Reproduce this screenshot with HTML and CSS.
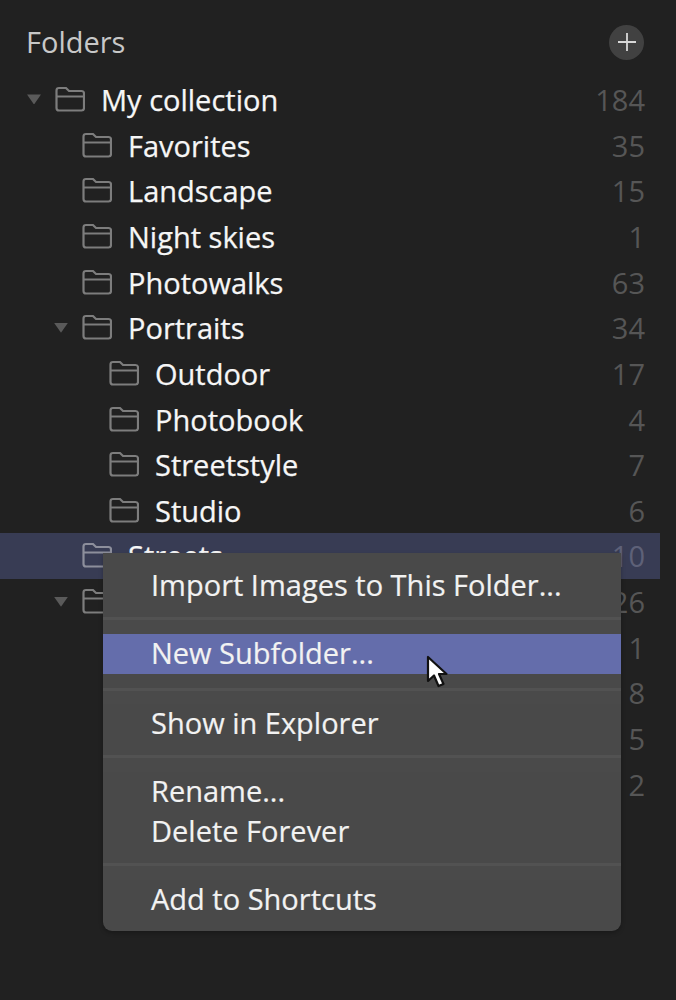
FILE: index.html
```html
<!DOCTYPE html>
<html lang="en">
<head>
<meta charset="utf-8">
<title>Folders</title>
<link rel="stylesheet" href="styles.css">
</head>
<body>
<svg class="defs" width="0" height="0"><symbol id="folder" viewBox="0 0 30 26"><path d="M1.5 22V4.5Q1.5 2 4 2H11L14 5H26.500Q29 5 29 7.500V22Q29 24.500 26.500 24.500H4Q1.500 24.500 1.500 22ZM1.500 10.500H29" fill="none" stroke="currentColor" stroke-width="2.200"/></symbol></svg>
<main class="panel">
  <header class="head">
    <h1 class="title">Folders</h1>
    <button class="add" aria-label="Add folder"><svg viewBox="0 0 20 20" width="20" height="20"><path d="M10 1V19M1 10H19" stroke="currentColor" stroke-width="1.800"/></svg></button>
  </header>
  <ul class="tree">
    <li class="row l0 open"><i class="arrow"></i><svg class="folder"><use href="#folder"/></svg><span class="name">My collection</span><span class="count">184</span></li>
    <li class="row l1"><i class="arrow"></i><svg class="folder"><use href="#folder"/></svg><span class="name">Favorites</span><span class="count">35</span></li>
    <li class="row l1"><i class="arrow"></i><svg class="folder"><use href="#folder"/></svg><span class="name">Landscape</span><span class="count">15</span></li>
    <li class="row l1"><i class="arrow"></i><svg class="folder"><use href="#folder"/></svg><span class="name">Night skies</span><span class="count">1</span></li>
    <li class="row l1"><i class="arrow"></i><svg class="folder"><use href="#folder"/></svg><span class="name">Photowalks</span><span class="count">63</span></li>
    <li class="row l1 open"><i class="arrow"></i><svg class="folder"><use href="#folder"/></svg><span class="name">Portraits</span><span class="count">34</span></li>
    <li class="row l2"><i class="arrow"></i><svg class="folder"><use href="#folder"/></svg><span class="name">Outdoor</span><span class="count">17</span></li>
    <li class="row l2"><i class="arrow"></i><svg class="folder"><use href="#folder"/></svg><span class="name">Photobook</span><span class="count">4</span></li>
    <li class="row l2"><i class="arrow"></i><svg class="folder"><use href="#folder"/></svg><span class="name">Streetstyle</span><span class="count">7</span></li>
    <li class="row l2"><i class="arrow"></i><svg class="folder"><use href="#folder"/></svg><span class="name">Studio</span><span class="count">6</span></li>
    <li class="row l1 selected"><i class="arrow"></i><svg class="folder"><use href="#folder"/></svg><span class="name">Streets</span><span class="count">10</span></li>
    <li class="row l1 open"><i class="arrow"></i><svg class="folder"><use href="#folder"/></svg><span class="name"></span><span class="count">26</span></li>
    <li class="row l2"><i class="arrow"></i><span class="name"></span><span class="count">1</span></li>
    <li class="row l2"><i class="arrow"></i><span class="name"></span><span class="count">8</span></li>
    <li class="row l2"><i class="arrow"></i><span class="name"></span><span class="count">5</span></li>
    <li class="row l2"><i class="arrow"></i><span class="name"></span><span class="count">2</span></li>
  </ul>
</main>
<nav class="menu">
  <div class="item">Import Images to This Folder...</div>
  <hr class="sep">
  <div class="item active">New Subfolder...</div>
  <hr class="sep wide">
  <div class="item">Show in Explorer</div>
  <hr class="sep">
  <div class="item">Rename...</div>
  <div class="item">Delete Forever</div>
  <hr class="sep">
  <div class="item">Add to Shortcuts</div>
</nav>
<svg class="cursor" viewBox="0 0 22 34" width="22" height="34"><path d="M2 2V26L8 20.500L12.500 31L17.500 29L13 19H20.500Z" fill="#fff" stroke="#111" stroke-width="2.200" stroke-linejoin="round"/></svg>
</body>
</html>
```
FILE: styles.css
```css
* { box-sizing: border-box; }
html, body { margin: 0; height: 1000px; overflow: hidden; }
body {
  background: #212121;
  font-family: "Open Sans", "Noto Sans", sans-serif;
  position: relative;
}
.defs { position: absolute; }
.panel { padding-top: 22px; }
.head {
  display: flex;
  align-items: center;
  justify-content: space-between;
  height: 40px;
  padding: 0 32px 0 27px;
  margin-bottom: 14.6px;
}
.title { margin: -2px 0 0 -1px; font-size: 29px; font-weight: 400; color: #c8c8c8; }
.add {
  width: 35px; height: 35px; padding: 0; border: 0; border-radius: 50%;
  background: #414141; color: #d8d8d8;
  display: flex; align-items: center; justify-content: center;
}
.tree { list-style: none; margin: 0; padding: 0; }
.row {
  display: flex; align-items: center;
  height: 45.67px;
  margin-right: 16px;
  padding-right: 15px;
  color: #f6f6f6;
  font-size: 29px;
  -webkit-text-stroke: 0.25px currentColor;
}
.l0 { padding-left: 27px; }
.l1 { padding-left: 54px; }
.l2 { padding-left: 81px; }
.arrow { width: 14px; height: 10px; margin-right: 14px; flex: none; }
.open .arrow {
  background: #5a5a5a;
  clip-path: polygon(0 0, 100% 0, 50% 100%);
}
.folder { width: 30px; height: 26px; color: #7d7d7d; flex: none; margin-right: 16px; margin-top: -1px; }
.name { flex: 1; white-space: nowrap; }
.count { color: #565656; -webkit-text-stroke: 0; }
.selected { background: #383c54; }
.selected .folder { color: #8d8f9c; }
.selected .count { color: #5e6178; }
.menu {
  position: absolute;
  left: 103px; top: 553px;
  width: 518px; height: 378px;
  padding: 13px 0 12px;
  background: #494949;
  border-radius: 0 0 9px 9px;
  box-shadow: 0 2px 4px rgba(0,0,0,.25);
  color: #f2f2f2;
  font-size: 29px;
  -webkit-text-stroke: 0.2px currentColor;
}
.item { height: 40px; line-height: 38px; padding-left: 48px; white-space: nowrap; }
.active { background: #646dab; }
.sep { height: 28px; margin: 0; border: 0; background: linear-gradient(#494949 0 11px, #525252 11px 14px, #4a4a4a 14px); }
.wide { height: 30px; background: linear-gradient(#494949 0 14px, #525252 14px 17px, #4a4a4a 17px); }
.cursor { position: absolute; left: 426px; top: 655px; }
```
